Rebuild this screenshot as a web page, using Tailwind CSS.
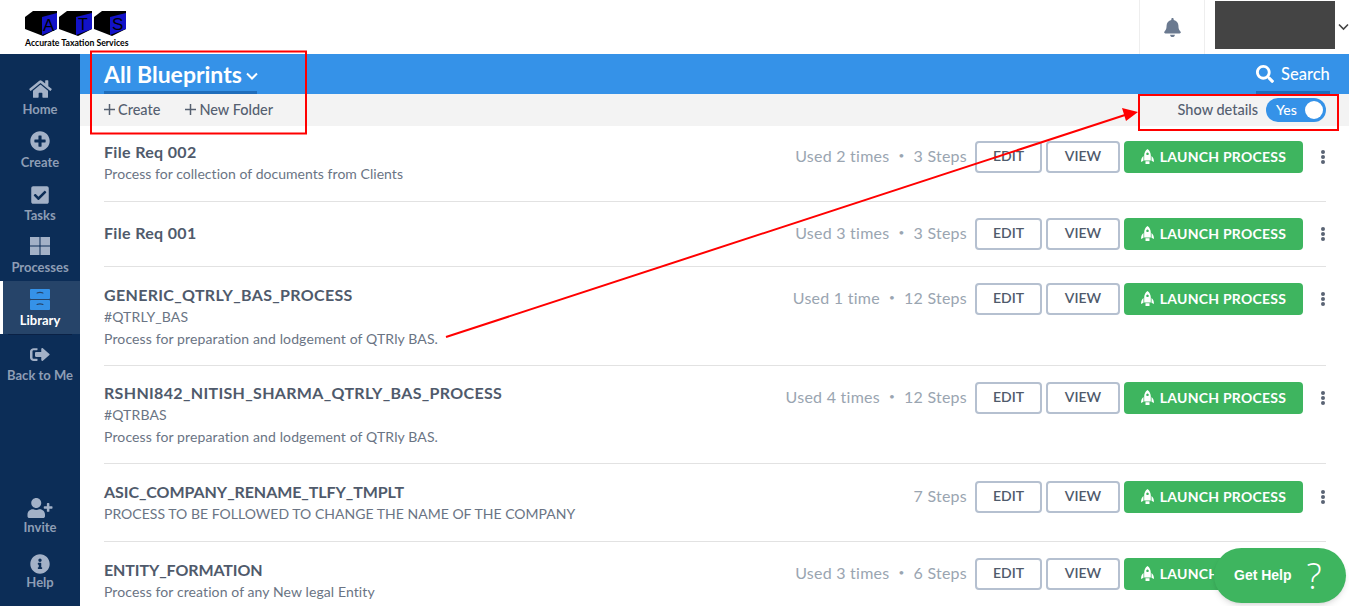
<!DOCTYPE html>
<html lang="en">
<head>
  <meta charset="UTF-8" />
  <title>All Blueprints</title>
  <script src="https://cdn.jsdelivr.net/npm/@tailwindcss/browser@4"></script>
</head>
<body class="bg-white font-['Lato','Noto_Sans',sans-serif] text-[#4f5a6b]">
<div class="relative h-screen overflow-hidden">

  <!-- Header -->
  <div class="flex h-[54px] bg-white">
    <div class="w-[1139px] pl-[25px] pt-[10px]">
      <svg class="block" width="102" height="26" viewBox="0 0 102 26">
        <path d="M0 7 8 1h24v18l-14 7-18-7z" fill="#000"/>
        <path d="M17 7 32 3v16l-15 6z" fill="#1212c8"/>
        <path d="M34 7 42 1h25v18l-14 7-19-7z" fill="#000"/>
        <path d="M51 7 67 3v16l-16 6z" fill="#1212c8"/>
        <path d="M69 7 77 1h24v18l-14 7-18-7z" fill="#000"/>
        <path d="M85 7 101 3v16l-16 6z" fill="#1212c8"/>
        <text x="18" y="21" font-size="17" font-family="Liberation Sans" fill="#000">A</text>
        <text x="53" y="20" font-size="16" font-family="Liberation Sans" fill="#000">T</text>
        <text x="87" y="20" font-size="17" font-family="Liberation Sans" fill="#000">S</text>
      </svg>
      <div class="mt-[1px] text-[8.7px] leading-[11px] font-bold text-black whitespace-nowrap">Accurate Taxation Services</div>
    </div>
    <div class="flex w-[66px] items-center justify-center border-x border-[#eeeeee]">
      <svg class="w-[17px] h-[19px]" viewBox="0 0 448 512" fill="#6b7a90"><path d="M224 512c35.32 0 63.97-28.65 63.97-64H160.03c0 35.35 28.65 64 63.97 64zm215.39-149.71c-19.32-20.76-55.47-51.99-55.47-154.29 0-77.7-54.48-139.9-127.94-155.16V32c0-17.67-14.32-32-31.98-32s-31.98 14.33-31.98 32v20.84C118.56 68.1 64.08 130.3 64.08 208c0 102.3-36.15 133.53-55.47 154.29-6 6.45-8.66 14.16-8.61 21.71.11 16.4 12.98 32 32.1 32h383.8c19.12 0 32-15.6 32.1-32 .05-7.55-2.61-15.27-8.61-21.71z"/></svg>
    </div>
    <div class="ml-[10px] mt-px h-[48px] w-[120px] bg-[#444444]"></div>
    <svg class="ml-[3px] mt-[23px] w-[11px] h-[8px]" viewBox="0 0 11 8" fill="none" stroke="#444" stroke-width="1.6"><path d="M1 1.5 5.5 6 10 1.5"/></svg>
  </div>

  <div class="flex h-[552px]">
    <!-- Sidebar -->
    <div class="relative flex w-[80px] shrink-0 flex-col bg-[#0c2d57] text-center text-[13px] font-bold text-[#8e9db5]">
      <div class="flex h-[77px] flex-col items-center pt-[25px]">
        <svg class="h-[20px] w-[23px] shrink-0" viewBox="0 0 576 512" fill="#a3b1c7"><path d="M280.37 148.26L96 300.11V464a16 16 0 0 0 16 16l112.06-.29a16 16 0 0 0 15.92-16V368a16 16 0 0 1 16-16h64a16 16 0 0 1 16 16v95.64a16 16 0 0 0 16 16.05L464 480a16 16 0 0 0 16-16V300L295.67 148.26a12.19 12.19 0 0 0-15.3 0zM571.6 251.47L488 182.56V44.05a12 12 0 0 0-12-12h-56a12 12 0 0 0-12 12v72.61L318.47 43a48 48 0 0 0-61 0L4.34 251.47a12 12 0 0 0-1.6 16.9l25.5 31A12 12 0 0 0 45.15 301l235.22-193.74a12.19 12.19 0 0 1 15.3 0L530.9 301a12 12 0 0 0 16.9-1.6l25.5-31a12 12 0 0 0-1.7-16.93z"/></svg>
        <span class="leading-[20px]">Home</span>
      </div>
      <div class="flex h-[53px] flex-col items-center">
        <svg class="h-[20px] w-[20px] shrink-0" viewBox="0 0 512 512" fill="#a3b1c7"><path d="M256 8C119 8 8 119 8 256s111 248 248 248 248-111 248-248S393 8 256 8zm144 276c0 6.6-5.4 12-12 12h-92v92c0 6.6-5.4 12-12 12h-56c-6.6 0-12-5.4-12-12v-92h-92c-6.6 0-12-5.4-12-12v-56c0-6.6 5.4-12 12-12h92v-92c0-6.6 5.4-12 12-12h56c6.6 0 12 5.4 12 12v92h92c6.6 0 12 5.4 12 12v56z"/></svg>
        <span class="mt-px leading-[20px]">Create</span>
      </div>
      <div class="flex h-[53px] flex-col items-center pt-px">
        <svg class="h-[20px] w-[18px] shrink-0" viewBox="0 0 448 512" fill="#a3b1c7"><path d="M400 480H48c-26.51 0-48-21.49-48-48V80c0-26.51 21.49-48 48-48h352c26.51 0 48 21.49 48 48v352c0 26.51-21.49 48-48 48zm-204.686-98.059l184-184c6.248-6.248 6.248-16.379 0-22.627l-22.627-22.627c-6.248-6.248-16.379-6.249-22.628 0L184 302.745l-70.059-70.059c-6.248-6.248-16.379-6.248-22.628 0l-22.627 22.627c-6.248 6.248-6.248 16.379 0 22.627l104 104c6.249 6.25 16.379 6.25 22.628.001z"/></svg>
        <span class="leading-[20px]">Tasks</span>
      </div>
      <div class="flex h-[44px] flex-col items-center">
        <svg class="h-[18px] w-[20px] shrink-0" viewBox="0 0 20 18" fill="#a3b1c7"><path d="M0 0h9.500v8.500H0zM10.500 0H20v8.500h-9.500zM0 9.500h9.500V18H0zM10.500 9.500H20V18h-9.500z"/></svg>
        <span class="mt-[2px] leading-[20px]">Processes</span>
      </div>
      <div class="flex h-[53px] flex-col items-center border-l-[3px] border-white bg-[#264469] pr-[3px] pt-[8px] text-white">
        <svg class="h-[21px] w-[20px] shrink-0" viewBox="0 0 20 21"><rect width="20" height="10" rx="1" fill="#3592e8"/><rect y="11" width="20" height="10" rx="1" fill="#3592e8"/><path d="M7 4.500c0-1.500 6-1.500 6 0M7 16c0-1.500 6-1.500 6 0" fill="none" stroke="#264469" stroke-width="1.200"/></svg>
        <span class="leading-[20px]">Library</span>
      </div>
      <div class="mx-[8px] h-px bg-[#0a2145]"></div>
      <div class="flex h-[53px] flex-col items-center pt-[11px]">
        <svg class="h-[17px] w-[20px] shrink-0" viewBox="0 0 512 512" preserveAspectRatio="none" fill="#a3b1c7"><path d="M497 273L329 441c-15 15-41 4.500-41-17v-96H152c-13.300 0-24-10.700-24-24v-96c0-13.300 10.700-24 24-24h136V88c0-21.400 25.900-32 41-17l168 168c9.300 9.400 9.300 24.600 0 34zM192 436v-40c0-6.600-5.400-12-12-12H96c-17.700 0-32-14.300-32-32V160c0-17.700 14.300-32 32-32h84c6.600 0 12-5.400 12-12V76c0-6.600-5.400-12-12-12H96c-53 0-96 43-96 96v192c0 53 43 96 96 96h84c6.600 0 12-5.400 12-12z"/></svg>
        <span class="mt-[2px] leading-[20px] whitespace-nowrap">Back to Me</span>
      </div>
      <div class="mt-auto flex h-[56px] flex-col items-center">
        <svg class="h-[20px] w-[26px] shrink-0" viewBox="0 0 640 512" fill="#a3b1c7"><path d="M624 208h-64v-64c0-8.800-7.200-16-16-16h-32c-8.800 0-16 7.200-16 16v64h-64c-8.800 0-16 7.200-16 16v32c0 8.800 7.200 16 16 16h64v64c0 8.800 7.200 16 16 16h32c8.800 0 16-7.200 16-16v-64h64c8.800 0 16-7.200 16-16v-32c0-8.800-7.200-16-16-16zm-400 48c70.700 0 128-57.300 128-128S294.700 0 224 0 96 57.300 96 128s57.300 128 128 128zm89.600 32h-16.700c-22.200 10.200-46.900 16-72.900 16s-50.600-5.800-72.900-16h-16.700C60.200 288 0 348.200 0 422.400V464c0 26.500 21.500 48 48 48h352c26.500 0 48-21.500 48-48v-41.600c0-74.200-60.200-134.400-134.400-134.400z"/></svg>
        <span class="mt-px leading-[16px]">Invite</span>
      </div>
      <div class="mb-[16px] flex h-[36px] flex-col items-center">
        <svg class="h-[20px] w-[20px] shrink-0" viewBox="0 0 512 512" fill="#a3b1c7"><path d="M256 8C119.043 8 8 119.083 8 256c0 136.997 111.043 248 248 248s248-111.003 248-248C504 119.083 392.957 8 256 8zm0 110c23.196 0 42 18.804 42 42s-18.804 42-42 42-42-18.804-42-42 18.804-42 42-42zm56 254c0 6.627-5.373 12-12 12h-88c-6.627 0-12-5.373-12-12v-24c0-6.627 5.373-12 12-12h12v-64h-12c-6.627 0-12-5.373-12-12v-24c0-6.627 5.373-12 12-12h64c6.627 0 12 5.373 12 12v100h12c6.627 0 12 5.373 12 12v24z"/></svg>
        <span class="leading-[16px]">Help</span>
      </div>
    </div>

    <!-- Main -->
    <div class="min-w-0 flex-1">
      <div class="flex h-[40px] items-stretch justify-between bg-[#3592e8] pl-[24px] pr-[19px] text-white">
        <div class="flex w-[153px] items-center gap-[4px] border-b-[3px] border-[#1f6dbb] pt-[3px] text-[23px] leading-none font-bold whitespace-nowrap">
          All Blueprints
          <svg class="mt-[4px] w-[12px] h-[9px] shrink-0" viewBox="0 0 12 9" fill="none" stroke="#fff" stroke-width="2"><path d="M1 1.500 6 6.500 11 1.500"/></svg>
        </div>
        <div class="flex w-[74px] items-center gap-[7px] border-b-[3px] border-[#1f6dbb] pt-[3px] text-[16.5px] font-medium">
          <svg class="h-[18px] w-[18px] shrink-0" viewBox="0 0 512 512" fill="#fff"><path d="M505 442.700L405.300 343c-4.500-4.500-10.600-7-17-7H372c27.600-35.300 44-79.700 44-128C416 93.100 322.900 0 208 0S0 93.100 0 208s93.100 208 208 208c48.300 0 92.700-16.400 128-44v16.300c0 6.400 2.500 12.500 7 17l99.700 99.700c9.400 9.400 24.600 9.400 33.900 0l28.300-28.300c9.400-9.400 9.400-24.600.1-34zM208 336c-70.700 0-128-57.200-128-128 0-70.700 57.200-128 128-128 70.700 0 128 57.200 128 128 0 70.700-57.200 128-128 128z"/></svg>
          Search
        </div>
      </div>
      <div class="flex h-[32px] items-center justify-between bg-[#f3f3f3] pb-px pl-[24px] pr-[23px] text-[14.5px] font-medium text-[#556070]">
        <div class="flex items-center gap-[25px]">
          <span class="flex items-center gap-[3px]"><svg class="h-[11px] w-[11px]" viewBox="0 0 11 11" stroke="#556070" stroke-width="1.500"><path d="M5.500 0v11M0 5.500h11"/></svg>Create</span>
          <span class="flex items-center gap-[3px]"><svg class="h-[11px] w-[11px]" viewBox="0 0 11 11" stroke="#556070" stroke-width="1.500"><path d="M5.500 0v11M0 5.500h11"/></svg>New Folder</span>
        </div>
        <div class="flex items-center gap-[8px]">
          <span>Show details</span>
          <span class="flex h-[24px] w-[60px] items-center justify-between rounded-full bg-[#3592e8] pl-[10px] pr-[3px] text-[14px] text-white">Yes<span class="h-[18px] w-[18px] rounded-full bg-white"></span></span>
        </div>
      </div>
      <div id="rows" class="mr-[23px] pl-[24px]"></div>
    </div>
  </div>

  <!-- Get Help -->
  <div class="absolute left-[1214px] top-[548px] flex h-[55px] w-[132px] items-center rounded-[28px] bg-[#3eb55f] pl-[20px] text-white shadow-md">
    <span class="text-[14px] font-bold font-['Liberation_Sans',sans-serif]">Get Help</span>
    <span class="ml-[15px] text-[36px] leading-none font-['Open_Sans',sans-serif] font-light">?</span>
  </div>

  <!-- Annotation marks -->
  <svg class="absolute left-0 top-0 h-[606px] w-[1349px] pointer-events-none" viewBox="0 0 1349 606" fill="none">
    <rect x="91" y="51.500" width="215" height="82" stroke="#f00" stroke-width="2"/>
    <rect x="1139" y="95" width="199" height="35" stroke="#f00" stroke-width="2"/>
    <path d="M446 337 1125 115" stroke="#f00" stroke-width="2"/>
    <path d="M1138 112 1122 108 1126 121z" fill="#f00"/>
  </svg>
</div>

<script>
  // rocket: rounded body with a window, two fins and a flame
  const rocket = '<svg class="h-[15px] w-[13px]" viewBox="0 0 13 15" fill="#fff"><path fill-rule="evenodd" d="M6.500 0C8.800 1.500 9.800 4 9.800 6.500V11.500H3.200V6.500C3.200 4 4.200 1.500 6.500 0zM6.500 3.500a1.300 1.300 0 1 0 .01 0z"/><path d="M2.500 7C1 8.200 0 10 0 13l2.500-1.200zM10.500 7c1.500 1.200 2.500 3 2.500 6l-2.500-1.200zM4.500 12.300h4V15h-4z"/></svg>';
  const rows = [
    { box: 'h-[76px] pt-[15px] border-b', text: '', head: 'tracking-[0.33px]', body: 'tracking-[0.04px]', title: 'File Req 002', lines: ['Process for collection of documents from Clients'], meta: ['Used 2 times', '3 Steps'] },
    { box: 'h-[65px] pt-[16px] border-b', text: 'mt-[4px]', head: 'tracking-[0.33px]', body: '', title: 'File Req 001', lines: [], meta: ['Used 3 times', '3 Steps'] },
    { box: 'h-[99px] pt-[16px] border-b', text: 'mt-[1px]', head: 'tracking-[0.33px]', body: 'tracking-[0.12px]', title: 'GENERIC_QTRLY_BAS_PROCESS', lines: ['#QTRLY_BAS', 'Process for preparation and lodgement of QTRly BAS.'], meta: ['Used 1 time', '12 Steps'] },
    { box: 'h-[98px] pt-[16px] border-b', text: '', head: 'tracking-[0.33px]', body: 'tracking-[0.12px]', title: 'RSHNI842_NITISH_SHARMA_QTRLY_BAS_PROCESS', lines: ['#QTRBAS', 'Process for preparation and lodgement of QTRly BAS.'], meta: ['Used 4 times', '12 Steps'] },
    { box: 'h-[78px] pt-[17px] border-b', text: '', head: 'tracking-[-0.07px]', body: 'tracking-[0.02px]', title: 'ASIC_COMPANY_RENAME_TLFY_TMPLT', lines: ['PROCESS TO BE FOLLOWED TO CHANGE THE NAME OF THE COMPANY'], meta: ['7 Steps'] },
    { box: 'h-[64px] pt-[16px]', text: 'mt-[1px]', head: 'tracking-[-0.1px]', body: 'tracking-[0.1px]', title: 'ENTITY_FORMATION', lines: ['Process for creation of any New legal Entity'], meta: ['Used 3 times', '6 Steps'] }
  ];

  document.getElementById('rows').innerHTML = rows.map(row => `
    <div class="flex justify-between border-[#e2e2e2] ${row.box}">
      <div class="${row.text}">
        <div class="text-[16px] leading-[22px] font-bold ${row.head} text-[#4f5a6b]">${row.title}</div>
        ${row.lines.map(line => `<div class="text-[14px] leading-[21.500px] ${row.body} text-[#6a7484]">${line}</div>`).join('')}
      </div>
      <div class="flex items-start">
        <div class="flex h-[29px] items-center gap-[9px] text-[16px] tracking-[0.25px] text-[#9aa5b1]">
          ${row.meta.join('<span class="text-[10px]">•</span>')}
        </div>
        <button class="ml-[8px] h-[32px] w-[67px] rounded-[4px] border-2 border-[#b5c0d0] pb-[4px] text-[14px] font-semibold text-[#4f5a6b]">EDIT</button>
        <button class="ml-[4px] h-[32px] w-[74px] rounded-[4px] border-2 border-[#b5c0d0] pb-[4px] text-[14px] font-semibold text-[#4f5a6b]">VIEW</button>
        <button class="ml-[4px] flex h-[32px] w-[179px] items-center justify-center gap-[6px] rounded-[4px] bg-[#3eb55f] pb-[1px] text-[14px] font-bold tracking-[0.25px] text-white">${rocket}LAUNCH PROCESS</button>
        <svg class="ml-[17px] mt-[9px] h-[14px] w-[6px]" viewBox="0 0 6 14" fill="#5a6474"><circle cx="3" cy="2" r="2"/><circle cx="3" cy="7" r="2"/><circle cx="3" cy="12" r="2"/></svg>
      </div>
    </div>`).join('');
</script>
</body>
</html>
